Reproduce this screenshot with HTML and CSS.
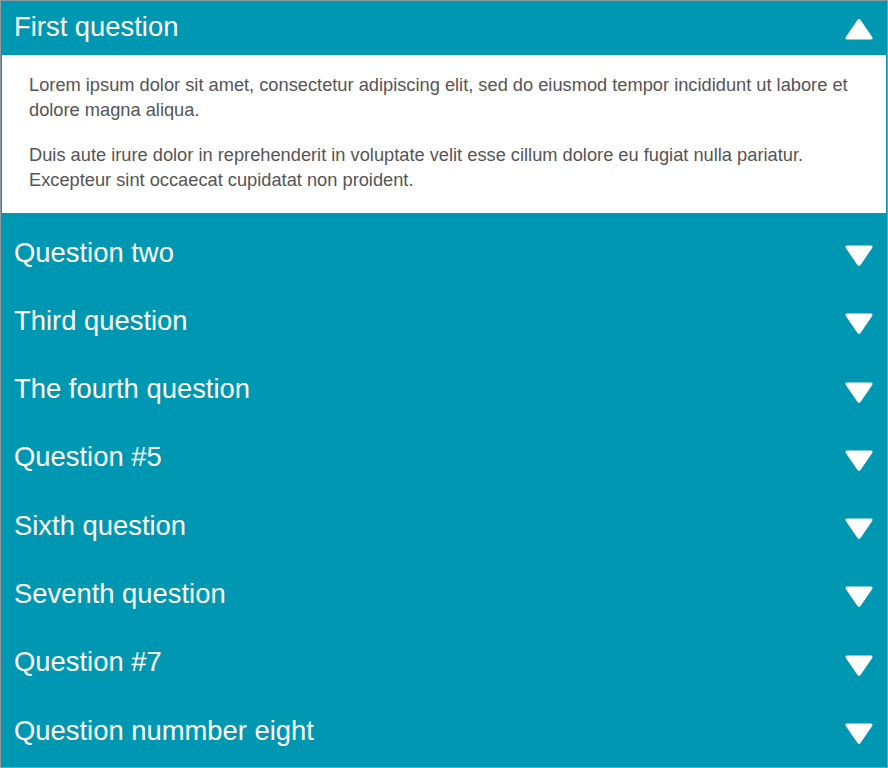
FILE: index.html
```html
<!DOCTYPE html>
<html>
<head>
<meta charset="utf-8">
<link rel="stylesheet" href="styles.css">
</head>
<body>
<div class="accordion">
  <div class="item open">
    <div class="header"><span class="title">First question</span><svg class="arrow" viewBox="0 0 28 22" width="28" height="22"><path d="M12.3 2.2 Q14 0 15.7 2.2 L27.2 19 Q28.3 21.5 25.6 21.5 L2.4 21.5 Q-0.3 21.5 0.8 19 Z" fill="#fff"/></svg></div>
    <div class="panel">
      <p>Lorem ipsum dolor sit amet, consectetur adipiscing elit, sed do eiusmod tempor incididunt ut labore et dolore magna aliqua.</p>
      <p>Duis aute irure dolor in reprehenderit in voluptate velit esse cillum dolore eu fugiat nulla pariatur. Excepteur sint occaecat cupidatat non proident.</p>
    </div>
  </div>
  <div class="item"><div class="header"><span class="title">Question two</span><svg class="arrow" viewBox="0 0 28 22" width="28" height="22"><path d="M12.3 19.8 Q14 22 15.7 19.8 L27.2 3 Q28.3 0.5 25.6 0.5 L2.4 0.5 Q-0.3 0.5 0.8 3 Z" fill="#fff"/></svg></div></div>
  <div class="item"><div class="header"><span class="title">Third question</span><svg class="arrow" viewBox="0 0 28 22" width="28" height="22"><path d="M12.3 19.8 Q14 22 15.7 19.8 L27.2 3 Q28.3 0.5 25.6 0.5 L2.4 0.5 Q-0.3 0.5 0.8 3 Z" fill="#fff"/></svg></div></div>
  <div class="item"><div class="header"><span class="title">The fourth question</span><svg class="arrow" viewBox="0 0 28 22" width="28" height="22"><path d="M12.3 19.8 Q14 22 15.7 19.8 L27.2 3 Q28.3 0.5 25.6 0.5 L2.4 0.5 Q-0.3 0.5 0.8 3 Z" fill="#fff"/></svg></div></div>
  <div class="item"><div class="header"><span class="title">Question #5</span><svg class="arrow" viewBox="0 0 28 22" width="28" height="22"><path d="M12.3 19.8 Q14 22 15.7 19.8 L27.2 3 Q28.3 0.5 25.6 0.5 L2.4 0.5 Q-0.3 0.5 0.8 3 Z" fill="#fff"/></svg></div></div>
  <div class="item"><div class="header"><span class="title">Sixth question</span><svg class="arrow" viewBox="0 0 28 22" width="28" height="22"><path d="M12.3 19.8 Q14 22 15.7 19.8 L27.2 3 Q28.3 0.5 25.6 0.5 L2.4 0.5 Q-0.3 0.5 0.8 3 Z" fill="#fff"/></svg></div></div>
  <div class="item"><div class="header"><span class="title">Seventh question</span><svg class="arrow" viewBox="0 0 28 22" width="28" height="22"><path d="M12.3 19.8 Q14 22 15.7 19.8 L27.2 3 Q28.3 0.5 25.6 0.5 L2.4 0.5 Q-0.3 0.5 0.8 3 Z" fill="#fff"/></svg></div></div>
  <div class="item"><div class="header"><span class="title">Question #7</span><svg class="arrow" viewBox="0 0 28 22" width="28" height="22"><path d="M12.3 19.8 Q14 22 15.7 19.8 L27.2 3 Q28.3 0.5 25.6 0.5 L2.4 0.5 Q-0.3 0.5 0.8 3 Z" fill="#fff"/></svg></div></div>
  <div class="item"><div class="header"><span class="title">Question nummber eight</span><svg class="arrow" viewBox="0 0 28 22" width="28" height="22"><path d="M12.3 19.8 Q14 22 15.7 19.8 L27.2 3 Q28.3 0.5 25.6 0.5 L2.4 0.5 Q-0.3 0.5 0.8 3 Z" fill="#fff"/></svg></div></div>
</div>
</body>
</html>
```
FILE: styles.css
```css
html, body {
  margin: 0;
  padding: 0;
}
body {
  width: 888px;
  height: 768px;
  overflow: hidden;
  font-family: "Liberation Sans", Arial, sans-serif;
}
.accordion {
  box-sizing: border-box;
  width: 888px;
  height: 768px;
  border: 1px solid #8b9a9e;
  background: #0097b2;
  display: flex;
  flex-direction: column;
}
.item + .item {
  margin-top: 14.3px;
}
.item.open + .item {
  margin-top: 16px;
}
.header {
  height: 54px;
  display: flex;
  align-items: center;
  justify-content: space-between;
  padding: 0 14px 0 13px;
  color: #fff;
}
.title {
  font-size: 27.4px;
  line-height: 30px;
  margin-bottom: 7px;
}
.open .title {
  margin-bottom: 3px;
}
.arrow {
  display: block;
  flex: none;
}
.open .arrow {
  margin-top: 1px;
}
.panel {
  background: #fff;
  border-left: 1px solid #0097b2;
  border-right: 1px solid #0097b2;
  padding: 17px 28px 21px 27px;
  color: #555;
  font-size: 18.25px;
  line-height: 25px;
}
.panel p {
  margin: 0;
}
.panel p + p {
  margin-top: 20px;
}
```
